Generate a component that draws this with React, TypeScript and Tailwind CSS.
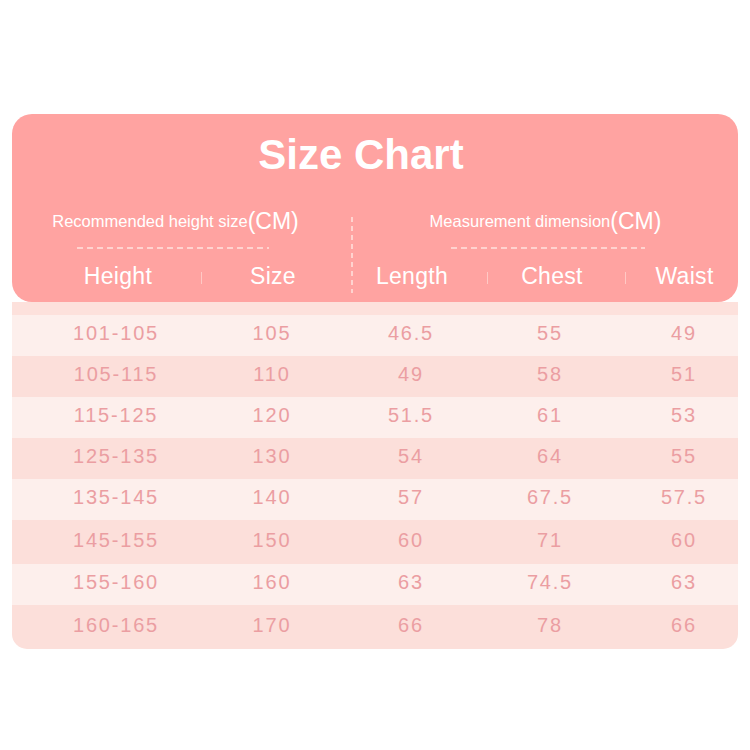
const rows = [
  { h: "101-105", s: "105", l: "46.5", c: "55", w: "49", tall: false },
  { h: "105-115", s: "110", l: "49", c: "58", w: "51", tall: false },
  { h: "115-125", s: "120", l: "51.5", c: "61", w: "53", tall: false },
  { h: "125-135", s: "130", l: "54", c: "64", w: "55", tall: false },
  { h: "135-145", s: "140", l: "57", c: "67.5", w: "57.5", tall: false },
  { h: "145-155", s: "150", l: "60", c: "71", w: "60", tall: true },
  { h: "155-160", s: "160", l: "63", c: "74.5", w: "63", tall: false },
  { h: "160-165", s: "170", l: "66", c: "78", w: "66", tall: true },
];

function Dashes({ width }: { width: string }) {
  return (
    <div
      className={`${width} mx-auto h-[2px] bg-[repeating-linear-gradient(90deg,#ffd3cf_0_6px,transparent_6px_10px)]`}
    />
  );
}

function Sep() {
  return <div className="w-px h-[12px] bg-[#ffc9c5] self-center mt-[4px]" />;
}

export default function App() {
  return (
    <div className="w-[750px] h-[750px] bg-white pt-[114px] px-[12px] font-['Liberation_Sans',Arial,sans-serif]">
      <div className="w-[726px]">
        {/* header block */}
        <div className="bg-[#ffa3a1] rounded-[20px] h-[188px] flex flex-col text-white">
          <h1 className="text-[42px] font-bold leading-none text-center pt-[20px] pr-[28px]">Size Chart</h1>
          <div className="flex mt-[33px]">
            <div className="w-[339px] flex flex-col">
              <div className="text-center pr-[12px] leading-none h-[24px] flex items-center justify-center">
                <span className="text-[16.5px]">Recommended height size</span>
                <span className="text-[23px] font-light">(CM)</span>
              </div>
              <div className="mt-[14px] pr-[18px]">
                <Dashes width="w-[192px]" />
              </div>
              <div className="flex mt-[13px] h-[28px] text-[23px] leading-none">
                <div className="w-[189px] pl-[23px] text-center self-center tracking-[0.3px]">Height</div>
                <Sep />
                <div className="w-[142px] text-center self-center tracking-[0.3px]">Size</div>
              </div>
            </div>
            <div className="w-[2px] h-[76px] mt-[8px] bg-[repeating-linear-gradient(180deg,#ffd3cf_0_5px,transparent_5px_9px)]" />
            <div className="flex-1 flex flex-col">
              <div className="text-center leading-none h-[24px] flex items-center justify-center">
                <span className="text-[16.5px]">Measurement dimension</span>
                <span className="text-[23px] font-light">(CM)</span>
              </div>
              <div className="mt-[14px] pl-[4px]">
                <Dashes width="w-[194px]" />
              </div>
              <div className="flex mt-[13px] h-[28px] text-[23px] leading-none">
                <div className="w-[134px] pr-[16px] text-center self-center tracking-[0.3px]">Length</div>
                <Sep />
                <div className="w-[137px] pr-[9px] text-center self-center tracking-[0.3px]">Chest</div>
                <Sep />
                <div className="flex-1 pl-[5px] text-center self-center tracking-[0.3px]">Waist</div>
              </div>
            </div>
          </div>
        </div>

        {/* data block */}
        <div className="rounded-b-[15px] overflow-hidden text-[#eb9ea2] text-[20px] tracking-[1.8px] leading-none">
          <div className="h-[13px] bg-[#fde1dc]" />
          {rows.map((r, i) => (
            <div
              key={i}
              className={`grid grid-cols-[208px_104px_174px_106px_134px] items-center pb-[5px] ${r.tall ? "h-[44px]" : "h-[41px]"} ${i % 2 === 0 ? "bg-[#fdefec]" : "bg-[#fcdfda]"}`}
            >
              <div className="text-center">{r.h}</div>
              <div className="text-center">{r.s}</div>
              <div className="text-center">{r.l}</div>
              <div className="text-center pr-[2px]">{r.c}</div>
              <div className="text-center pl-[26px]">{r.w}</div>
            </div>
          ))}
        </div>
      </div>
    </div>
  );
}
